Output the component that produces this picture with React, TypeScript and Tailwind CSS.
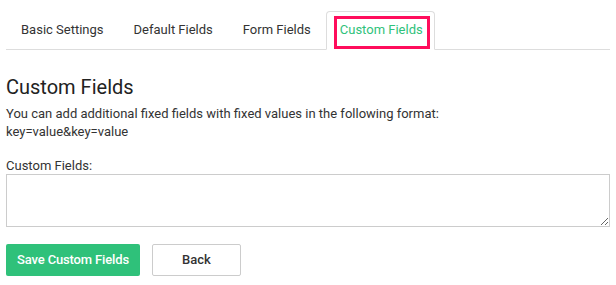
import React from "react";

const tabs = ["Basic Settings", "Default Fields", "Form Fields"];

export default function App() {
  return (
    <div className="min-h-[285px] w-[616px] bg-white pl-[6px] pr-[6px] pt-[11px] text-[#333] [font-family:Roboto,'Liberation_Sans',sans-serif]">
      <div className="flex border-b border-[#ddd]">
        {tabs.map((t) => (
          <div
            key={t}
            className="border border-transparent px-[14px] py-2 text-[13px] leading-5"
          >
            {t}
          </div>
        ))}
        <div className="relative -mb-px rounded-t-[4px] border border-[#ddd] border-b-white bg-white pl-[13px] pr-[11px] py-2 text-[13px] leading-5 text-[#2fc27b]">
          Custom Fields
          <div className="pointer-events-none absolute left-[7px] right-[4px] top-[4px] bottom-0 border-[3px] border-[#ff0d5c]" />
        </div>
      </div>

      <h2 className="mt-[25px] text-[20px] leading-6 font-normal text-[#222]">Custom Fields</h2>
      <p className="mt-[6px] text-[13px] leading-[18px]">
        You can add additional fixed fields with fixed values in the following format:
        <br />
        key=value&amp;key=value
      </p>

      <div className="mt-[16px] text-[13px] leading-[17px]">Custom Fields:</div>
      <textarea className="block h-[53px] w-[604px] border border-[#ccc] bg-white outline-none" />

      <div className="mt-[17px] flex gap-[12px]">
        <button className="h-8 w-[134px] rounded-[2px] bg-[#2fc17a] text-[13px] font-medium tracking-[-0.15px] text-white">
          Save Custom Fields
        </button>
        <button className="h-8 w-[89px] rounded-[2px] border border-[#ccc] bg-white text-[13px] font-medium text-[#333]">
          Back
        </button>
      </div>
    </div>
  );
}
